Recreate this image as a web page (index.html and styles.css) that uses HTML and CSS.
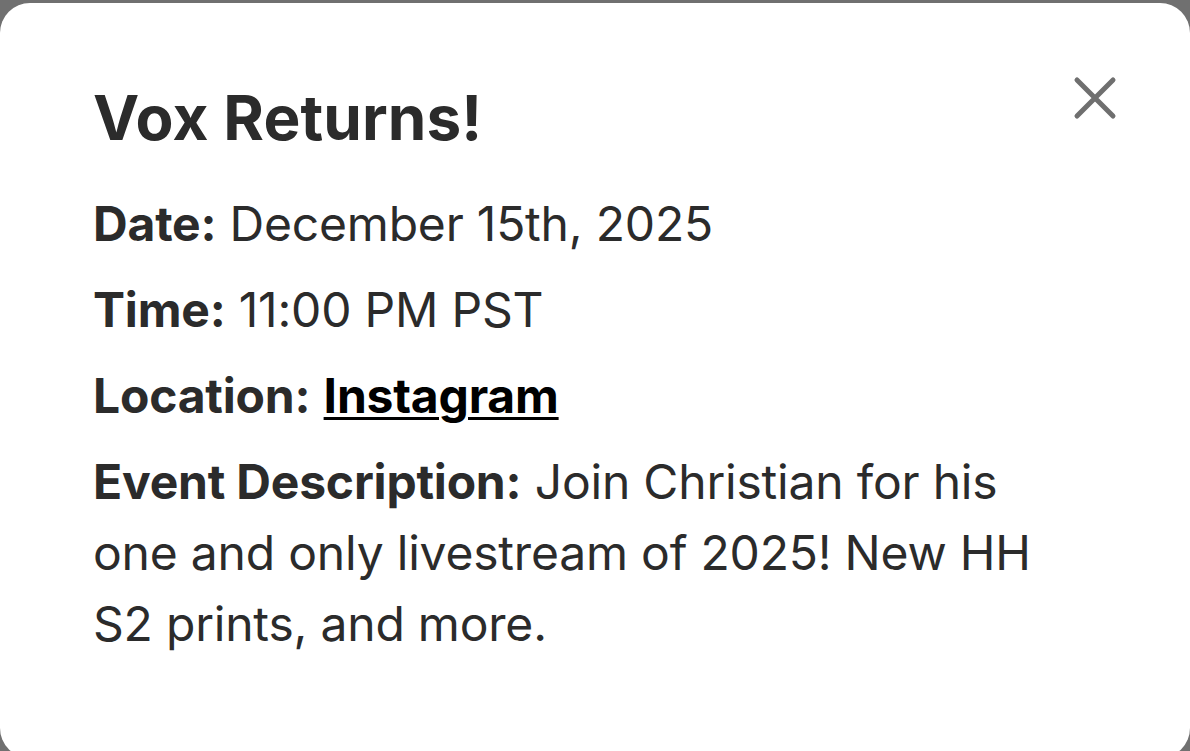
FILE: index.html
```html
<!DOCTYPE html>
<html>
<head>
    <title>Vox Returns!</title>
    <link rel="stylesheet" href="styles.css">
</head>
<body>
    <div class="card">
        <div class="card-head">
            <h2 class="title">Vox Returns!</h2>
            <button class="close" aria-label="Close">
                <svg width="48" height="48" viewBox="0 0 48 48">
                    <path d="M6 6 L42 42 M42 6 L6 42" stroke="#6f6f6f" stroke-width="5" stroke-linecap="round" fill="none"/>
                </svg>
            </button>
        </div>

        <p class="info"><b>Date:</b> December 15th, 2025</p>
        <p class="info"><b>Time:</b> 11:00 PM PST</p>
        <p class="info"><b>Location:</b> <a href="#" class="link">Instagram</a></p>
        <p class="info desc"><b>Event Description:</b> Join Christian for his one and only livestream of 2025! New HH S2 prints, and more.</p>
    </div>
</body>
</html>
```

FILE: styles.css
```css
html, body {
    margin: 0;
    height: 100%;
    overflow: hidden;
}
body {
    background-color: #707070;
    font-family: Inter, "Liberation Sans", sans-serif;
    color: #2b2b2b;
}
.card {
    margin-top: 3px;
    height: 755px;
    background-color: #fff;
    border-radius: 30px;
    padding: 78px 71px 0 93px;
    box-sizing: border-box;
}
.card-head {
    display: flex;
    justify-content: space-between;
    align-items: flex-start;
    margin-bottom: 33px;
}
.title {
    margin: 0;
    font-size: 62px;
    font-weight: 700;
    line-height: 1.2;
    letter-spacing: 0.1px;
}
.close {
    border: none;
    background: none;
    padding: 0;
    width: 48px;
    height: 48px;
    margin-top: -7px;
    cursor: pointer;
}
.close svg {
    display: block;
}
.info {
    margin: 0 0 15px 0;
    font-size: 48px;
    line-height: 71px;
    font-weight: 400;
    letter-spacing: -0.2px;
    max-width: 960px;
}
.info b {
    font-weight: 700;
}
.link {
    color: #000;
    font-weight: 700;
    text-decoration: underline;
    text-underline-offset: 4px;
    text-decoration-thickness: 3px;
}
```
